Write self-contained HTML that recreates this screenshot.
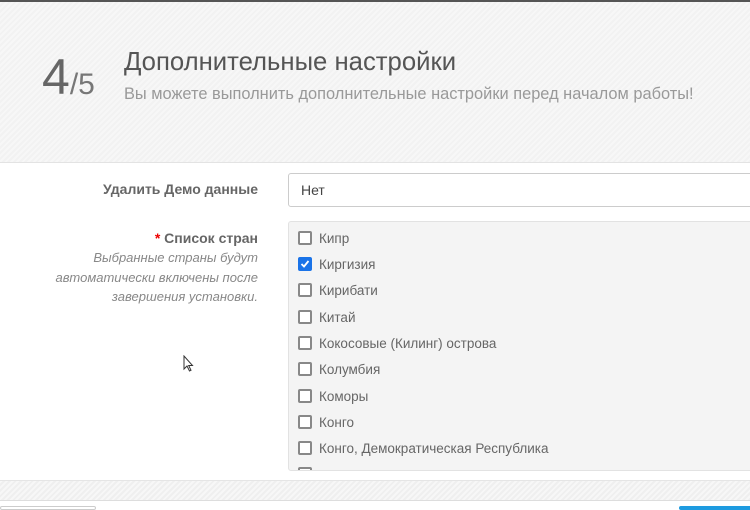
<!DOCTYPE html>
<html><head><meta charset="utf-8"><style>
*{margin:0;padding:0;box-sizing:border-box}
body{width:750px;height:509px;overflow:hidden;background:#fff;font-family:"Liberation Sans",sans-serif;position:relative}
.hdr{position:absolute;left:0;top:0;width:750px;height:163px;background:repeating-linear-gradient(135deg,#f7f7f7 0 2px,#f2f2f2 2px 4px);border-top:2px solid #555;border-bottom:1px solid #e3e3e3}
.num{position:absolute;left:42px;top:51px;font-size:50px;color:#666;line-height:52px}
.num span{font-size:30px;color:#777}
.t1{position:absolute;left:124px;top:48px;font-size:25.7px;color:#555}
.t2{position:absolute;left:124px;top:85px;font-size:16.4px;color:#999}
.lbl{position:absolute;right:492px;font-size:14px;color:#666;font-weight:bold;text-align:right}
.help{position:absolute;right:492px;top:248px;font-size:13px;color:#888;font-style:italic;text-align:right;line-height:19.5px}
.sel{position:absolute;left:288px;top:173px;width:470px;height:34px;border:1px solid #ccc;border-radius:3px;padding:8px 12px;font-size:14px;color:#444}
.box{position:absolute;left:288px;top:221px;width:470px;height:250px;background:#f4f4f4;border:1px solid #e2e2e2;border-radius:3px;overflow:hidden}
.it{position:absolute;left:9px;height:20px;font-size:13.5px;color:#666;display:flex;align-items:center}
.cb{width:14px;height:14px;border:2px solid #888;border-radius:2px;margin-right:7px;background:#fff}
.cb.on{background:#1a73e8;border-color:#1a73e8;position:relative}
.foot{position:absolute;left:0;top:480px;width:750px;height:21px;background:repeating-linear-gradient(135deg,#f7f7f7 0 2px,#efefef 2px 4px);border-top:1px solid #e5e5e5;border-bottom:1px solid #ddd}
</style></head><body>
<div class="hdr"></div>
<div class="num">4<span>/5</span></div>
<div class="t1">Дополнительные настройки</div>
<div class="t2">Вы можете выполнить дополнительные настройки перед началом работы!</div>
<div class="lbl" style="top:181px">Удалить Демо данные</div>
<div class="sel">Нет</div>
<div class="lbl" style="top:230px"><span style="color:#e00">*</span> Список стран</div>
<div class="help">Выбранные страны будут<br>автоматически включены после<br>завершения установки.</div>
<svg style="position:absolute;left:183px;top:355px" width="11" height="17" viewBox="0 0 11 17"><path d="M1 1 L1 14 L4 11 L6.5 16 L8 15.3 L5.7 10.5 L9.5 10.5 Z" fill="#fff" stroke="#333" stroke-width="1"/></svg>
<div class="box">
<div class="it" style="top:6px"><div class="cb"></div>Кипр</div>
<div class="it" style="top:32px"><div class="cb on"><svg style="position:absolute;left:0;top:0" width="10" height="10" viewBox="0 0 10 10"><path d="M1.5 5 L4 7.5 L8.5 2" stroke="#fff" stroke-width="1.8" fill="none"/></svg></div>Киргизия</div>
<div class="it" style="top:58px"><div class="cb"></div>Кирибати</div>
<div class="it" style="top:85px"><div class="cb"></div>Китай</div>
<div class="it" style="top:111px"><div class="cb"></div>Кокосовые (Килинг) острова</div>
<div class="it" style="top:137px"><div class="cb"></div>Колумбия</div>
<div class="it" style="top:164px"><div class="cb"></div>Коморы</div>
<div class="it" style="top:190px"><div class="cb"></div>Конго</div>
<div class="it" style="top:216px"><div class="cb"></div>Конго, Демократическая Республика</div>
<div class="it" style="top:242px"><div class="cb"></div></div>
</div>
<div class="foot"></div>
<div style="position:absolute;left:0;top:506px;width:96px;height:4px;border:1px solid #ccc;border-radius:3px"></div>
<div style="position:absolute;left:679px;top:506px;width:80px;height:4px;background:#1e9be0;border-radius:3px"></div>
</body></html>
